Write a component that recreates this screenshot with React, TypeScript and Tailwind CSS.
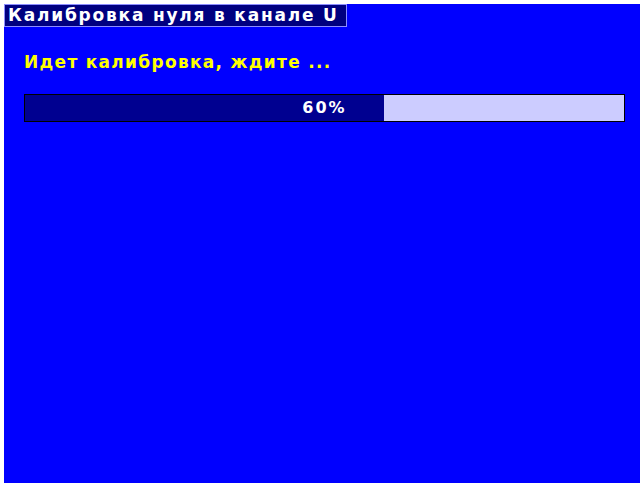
export default function App() {
    const progress = 60;
    return (
        <div className="w-[640px] h-[483px] bg-white pl-1 pt-1 overflow-hidden" style={{ fontFamily: '"DejaVu Sans", "Liberation Sans", sans-serif' }}>
            <div className="w-full h-full bg-[#0000ff]">
                <div className="inline-flex items-center h-[23px] pl-[3px] pr-[7px] bg-[#000080] border border-[#8c8cff] text-white font-bold text-[17px] tracking-[1.8px] leading-none">
                    Калибровка нуля в канале U
                </div>
                <div className="pl-5 pt-[26px] text-[#ffff00] font-bold text-[17px] tracking-[1.3px] leading-none">
                    Идет калибровка, ждите ...
                </div>
                <div className="relative ml-5 mt-[23px] w-[601px] h-[28px] border border-black bg-[#ccccff] flex">
                    <div className="h-full bg-[#000090]" style={{ width: `${progress}%` }} />
                    <span className="absolute inset-0 flex items-center justify-center text-white font-bold text-[16px] tracking-[2px]">{progress}%</span>
                </div>
            </div>
        </div>
    );
}
